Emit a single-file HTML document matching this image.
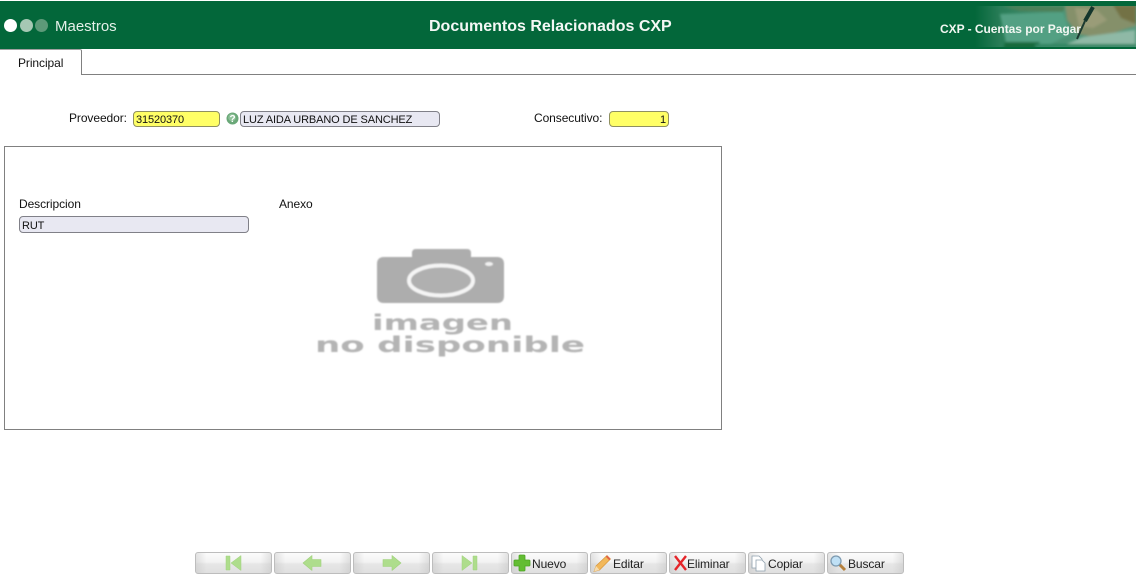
<!DOCTYPE html>
<html lang="es">
<head>
<meta charset="utf-8">
<title>Documentos Relacionados CXP</title>
<style>
html,body{margin:0;padding:0;background:#fff;}
body{width:1136px;height:586px;position:relative;overflow:hidden;font-family:"Liberation Sans",sans-serif;color:#111;}
.a{position:absolute;white-space:nowrap;}
.hdr{left:0;top:1px;width:1136px;height:48px;background:#03673a;}
.dot{position:absolute;border-radius:50%;width:13px;height:13px;top:19px;}
.lbl{font-size:12px;line-height:14px;color:#111;letter-spacing:-.08px;}
.inp{position:absolute;box-sizing:border-box;height:16px;border:1px solid #85856e;border-radius:4px;font-size:11px;line-height:16px;padding-left:2px;color:#111;white-space:nowrap;overflow:hidden;letter-spacing:-.12px;}
.y{background:#ffff66;border-color:#8f9060;}
.g{background:#e8e8f2;border-color:#808088;}
.btn{position:absolute;top:552px;width:77px;height:22px;box-sizing:border-box;border:1px solid #bdbdbd;border-radius:3px;background:linear-gradient(90deg,rgba(190,190,190,.4) 0,rgba(255,255,255,0) 14%,rgba(255,255,255,0) 86%,rgba(190,190,190,.4) 100%),linear-gradient(#fcfcfc 0,#f3f3f3 45%,#e6e6e6 55%,#e0e0e0 100%);font-size:12px;line-height:22px;color:#222;white-space:nowrap;}
.btn svg{position:absolute;left:0;top:0;}
.btn span{position:absolute;top:0;letter-spacing:-.1px;}
</style>
</head>
<body>
<div class="a hdr"></div>
<svg class="a" style="left:975px;top:6px" width="161" height="41" viewBox="0 0 161 41">
<defs>
<linearGradient id="f" x1="0" x2="1" y1="0" y2="0"><stop offset="0" stop-color="#03673a"/><stop offset=".16" stop-color="#2a7d58"/><stop offset=".5" stop-color="#4a9274"/><stop offset="1" stop-color="#5a9a80"/></linearGradient>
<filter id="b1" x="-5%" y="-5%" width="110%" height="110%"><feGaussianBlur stdDeviation="1.300"/></filter>
<clipPath id="c"><rect width="161" height="41"/></clipPath>
</defs>
<rect width="161" height="41" fill="url(#f)"/>
<g clip-path="url(#c)"><g filter="url(#b1)">
<path d="M28 0H90L88 6L45 5Z" fill="#4e8058"/>
<path d="M25 8L88 6L95 28L70 41H32Z" fill="#52a083"/>
<path d="M30 36H65L60 44H28Z" fill="#146a3e"/>
<path d="M90 -1H161V20L150 23L125 32L103 28L92 14Z" fill="#85906a"/>
<path d="M100 2L122 4L132 14L118 22L104 20Z" fill="#9a9c78"/>
<path d="M138 -1H161V18L146 12Z" fill="#737244"/>
<path d="M108 31L160 24V41H85Z" fill="#8fb9a6"/>
<path d="M60 38H161V41H60Z" fill="#2f8460"/>
</g></g>
<path d="M118 1L110 15" stroke="#14352c" stroke-width="4" fill="none"/>
<path d="M110 15L102 33" stroke="#1c3a30" stroke-width="2" fill="none"/>
</svg>
<div class="dot" style="left:4px;background:#fff"></div>
<div class="dot" style="left:20px;background:#a6c8b4"></div>
<div class="dot" style="left:35px;background:#5d9a79"></div>
<div class="a" style="left:55px;top:18px;font-size:15px;line-height:18px;color:#e4f0e9">Maestros</div>
<div class="a" style="left:429px;top:17px;font-size:16px;line-height:19px;font-weight:bold;color:#f4f8f5">Documentos Relacionados CXP</div>
<div class="a" style="left:940px;top:22px;font-size:12px;line-height:14px;font-weight:bold;color:#f2f7f2;letter-spacing:-.04px">CXP - Cuentas por Pagar</div>

<div class="a" style="left:81px;top:74px;width:1055px;height:1px;background:#808080"></div>
<div class="a" style="left:0;top:49px;width:82px;height:26px;box-sizing:border-box;border-right:1px solid #808080;border-top:1px solid #a0a0a0;border-top-right-radius:2px;background:#fff"></div>
<div class="a lbl" style="left:18px;top:56px">Principal</div>

<div class="a lbl" style="left:69px;top:111px">Proveedor:</div>
<div class="inp y" style="left:133px;top:111px;width:87px">31520370</div>
<svg class="a" style="left:226px;top:112px" width="14" height="14" viewBox="0 0 14 14">
<circle cx="6.500" cy="6.500" r="6" fill="#6aa878"/>
<circle cx="6" cy="5.500" r="3.800" fill="#a5d0ad" opacity=".6"/>
<text x="6.500" y="10" font-family="Liberation Sans" font-size="10" font-weight="bold" fill="#fff" text-anchor="middle">?</text>
</svg>
<div class="inp g" style="left:240px;top:111px;width:200px">LUZ AIDA URBANO DE SANCHEZ</div>

<div class="a lbl" style="left:534px;top:111px">Consecutivo:</div>
<div class="inp y" style="left:609px;top:111px;width:60px;text-align:right;padding:0 2px 0 0">1</div>

<div class="a" style="left:4px;top:146px;width:718px;height:284px;box-sizing:border-box;border:1px solid #808080"></div>
<div class="a lbl" style="left:19px;top:197px">Descripcion</div>
<div class="a lbl" style="left:279px;top:197px">Anexo</div>
<div class="inp g" style="left:19px;top:216px;width:230px;height:17px;line-height:17px;padding-top:1px">RUT</div>

<svg class="a" style="left:300px;top:240px" width="300" height="125" viewBox="0 0 300 125">
<defs><filter id="b3" x="-5%" y="-20%" width="110%" height="140%"><feGaussianBlur stdDeviation=".7"/></filter></defs>
<g filter="url(#b3)">
<path d="M77 24Q77 17 84 17H112V13Q112 9 116 9H167Q171 9 171 13V17H197Q204 17 204 24V56Q204 63 197 63H84Q77 63 77 56Z" fill="#adadad"/>
<ellipse cx="141" cy="40.500" rx="32" ry="15" fill="#b0b0b0" stroke="#f4f4f4" stroke-width="4"/>
<ellipse cx="189" cy="24" rx="4" ry="2" fill="#f0f0f0"/>
</g>
<g filter="url(#b3)" font-family="DejaVu Sans,sans-serif" font-weight="bold" fill="#b4b4b4" font-size="21">
<text x="72" y="90" textLength="141" lengthAdjust="spacingAndGlyphs">imagen</text>
<text x="15" y="112" textLength="270" lengthAdjust="spacingAndGlyphs">no disponible</text>
</g>
</svg>

<div class="btn" style="left:195px">
<svg width="75" height="20" viewBox="0 0 75 20"><path d="M30 3h4v14h-4zM45 2.500v15l-10-7.500z" fill="#aedd8c" stroke="#a0d27c" stroke-width=".5"/></svg>
</div>
<div class="btn" style="left:274px">
<svg width="75" height="20" viewBox="0 0 75 20"><path d="M28 10l9-7.500v4h9v7h-9v4z" fill="#aedd8c" stroke="#a0d27c" stroke-width=".6" stroke-linejoin="round"/></svg>
</div>
<div class="btn" style="left:353px">
<svg width="75" height="20" viewBox="0 0 75 20"><path d="M47 10l-9-7.500v4h-9v7h9v4z" fill="#aedd8c" stroke="#a0d27c" stroke-width=".6" stroke-linejoin="round"/></svg>
</div>
<div class="btn" style="left:432px">
<svg width="75" height="20" viewBox="0 0 75 20"><path d="M40 3h4v14h-4zM29 2.500v15l10-7.500z" fill="#aedd8c" stroke="#a0d27c" stroke-width=".5"/></svg>
</div>
<div class="btn" style="left:511px">
<svg width="22" height="20" viewBox="0 0 22 20"><path d="M8 2h4q1 0 1 1v4h4q1 0 1 1v4q0 1-1 1h-4v4q0 1-1 1H8q-1 0-1-1v-4H3q-1 0-1-1V8q0-1 1-1h4V3q0-1 1-1z" fill="#63bd33" stroke="#4ca423" stroke-width=".8"/></svg>
<span style="left:20px">Nuevo</span>
</div>
<div class="btn" style="left:590px">
<svg width="22" height="20" viewBox="0 0 22 20"><path d="M3 18.500l2-5.500L16 2.500l3.500 3.500L8.500 17z" fill="#f2b85a" stroke="#d8983e" stroke-width=".7"/><path d="M3 18.500l2-5.500 3.500 4z" fill="#f5dcb0"/><path d="M16 2.500l3.500 3.500-1.200 1.200-3.500-3.500z" fill="#e2604a"/></svg>
<span style="left:22px">Editar</span>
</div>
<div class="btn" style="left:669px">
<svg width="20" height="20" viewBox="0 0 20 20"><path d="M5 3l11 14M16 3L5 17" stroke="#e5252a" stroke-width="2.400" fill="none"/></svg>
<span style="left:17px">Eliminar</span>
</div>
<div class="btn" style="left:748px">
<svg width="20" height="20" viewBox="0 0 20 20"><path d="M3 3h7l3 3v9H3z" fill="#fff" stroke="#8fa0ad" stroke-width=".8"/><path d="M7 7h6l3 3v8H7z" fill="#fff" stroke="#8fa0ad" stroke-width=".8"/></svg>
<span style="left:19px">Copiar</span>
</div>
<div class="btn" style="left:827px">
<svg width="20" height="20" viewBox="0 0 20 20"><path d="M11 11l6 6" stroke="#b5803c" stroke-width="3"/><circle cx="8" cy="8" r="5" fill="#bfe0f5" stroke="#7d9ab0" stroke-width="1.300"/></svg>
<span style="left:20px">Buscar</span>
</div>
</body>
</html>
